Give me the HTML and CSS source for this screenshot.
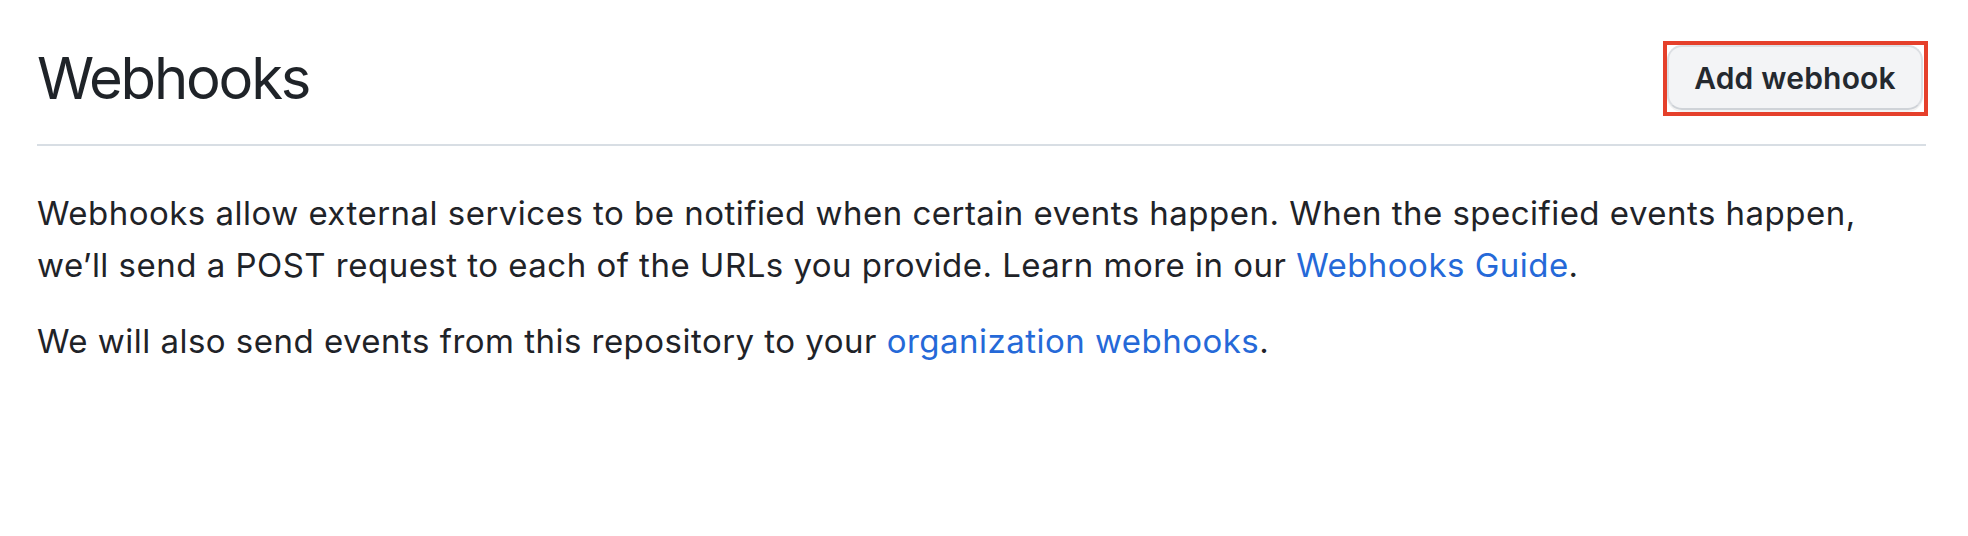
FILE: index.html
```html
<!DOCTYPE html>
<html lang="en">
<head>
<meta charset="utf-8">
<title>Webhooks</title>
<link rel="stylesheet" href="styles.css">
</head>
<body>
<main class="page">
  <div class="subhead">
    <h2 class="subhead-title">Webhooks</h2>
    <span class="highlight">
      <button class="btn" type="button">Add webhook</button>
    </span>
  </div>
  <p class="text">Webhooks allow external services to be notified when certain events happen. When the specified events happen,<br>we’ll send a POST request to each of the URLs you provide. Learn more in our <a class="link" href="#">Webhooks Guide</a>.</p>
  <p class="text">We will also send events from this repository to your <a class="link" href="#">organization webhooks</a>.</p>
</main>
</body>
</html>
```
FILE: styles.css
```css
html, body {
  margin: 0;
  padding: 0;
  background: #ffffff;
}

body {
  font-family: Inter, "Noto Sans", "Liberation Sans", sans-serif;
  color: #1f2328;
}

.page {
  padding: 41px 42px 0 37px;
}

.subhead {
  display: flex;
  justify-content: space-between;
  align-items: center;
  border-bottom: 2px solid #d8dee4;
  padding-bottom: 28px;
}

.subhead-title {
  margin: 0;
  font-size: 58px;
  font-weight: 400;
  line-height: 75px;
  letter-spacing: -2.2px;
}

.highlight {
  display: inline-flex;
  border: 4px solid #e5402b;
  padding: 0 1px 2px 0;
  margin-right: -2px;
}

.btn {
  font-family: Inter, "Noto Sans", "Liberation Sans", sans-serif;
  font-size: 30px;
  font-weight: 600;
  color: #24292f;
  background: #f3f4f6;
  border: 2px solid #dcdfe3;
  border-bottom-color: #cfd3d8;
  border-radius: 15px;
  width: 256px;
  height: 65px;
  padding: 0;
  line-height: 1;
  letter-spacing: 0.2px;
  box-shadow: 0 2px 0 rgba(31, 35, 40, 0.06);
}

.text {
  margin: 41px 0 0;
  font-size: 33px;
  line-height: 52px;
  letter-spacing: 0.48px;
}

.text + .text {
  margin-top: 24px;
}

.link {
  color: #2569d8;
  text-decoration: none;
}
```
